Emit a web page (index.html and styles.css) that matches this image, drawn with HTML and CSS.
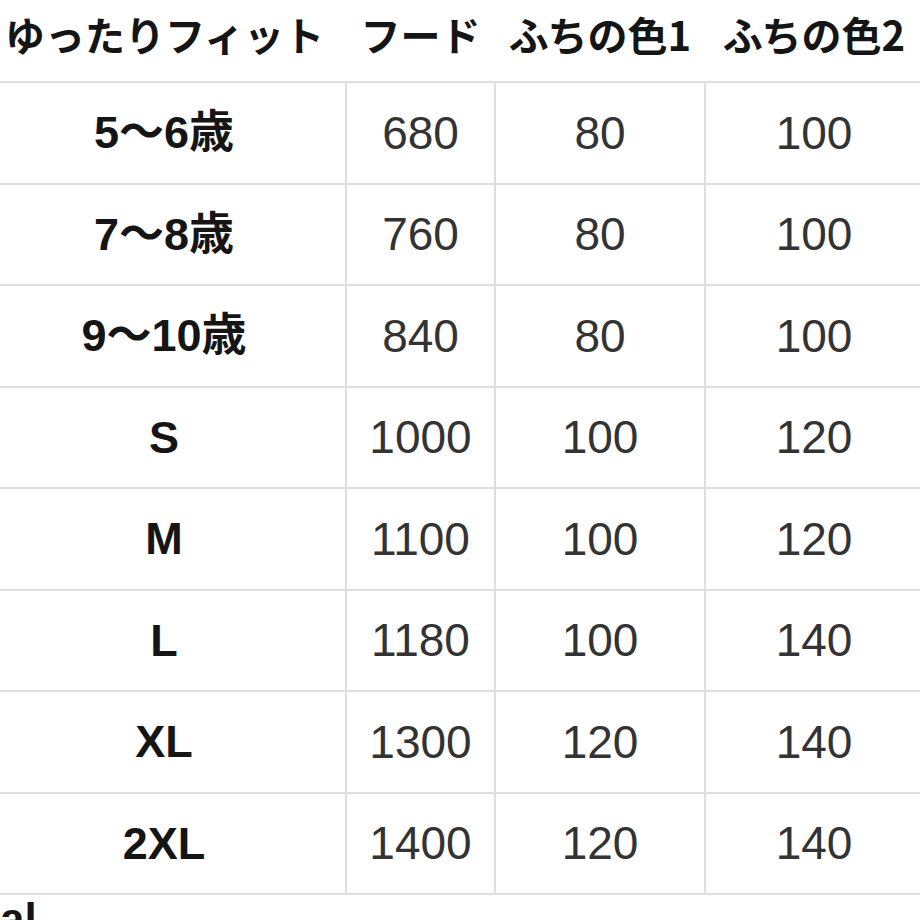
FILE: index.html
```html
<!DOCTYPE html>
<html lang="ja">
<head>
<meta charset="utf-8">
<link rel="stylesheet" href="styles.css">
</head>
<body>
<table class="size-table">
  <thead>
    <tr>
      <th class="col-size">ゆったりフィット</th>
      <th class="col-hood">フード</th>
      <th class="col-c1">ふちの色1</th>
      <th class="col-c2">ふちの色2</th>
    </tr>
  </thead>
  <tbody>
    <tr><td class="size">5〜6歳</td><td>680</td><td>80</td><td>100</td></tr>
    <tr><td class="size">7〜8歳</td><td>760</td><td>80</td><td>100</td></tr>
    <tr><td class="size">9〜10歳</td><td>840</td><td>80</td><td>100</td></tr>
    <tr><td class="size">S</td><td>1000</td><td>100</td><td>120</td></tr>
    <tr><td class="size">M</td><td>1100</td><td>100</td><td>120</td></tr>
    <tr><td class="size">L</td><td>1180</td><td>100</td><td>140</td></tr>
    <tr><td class="size">XL</td><td>1300</td><td>120</td><td>140</td></tr>
    <tr><td class="size">2XL</td><td>1400</td><td>120</td><td>140</td></tr>
  </tbody>
</table>
<p class="note">al</p>
</body>
</html>
```
FILE: styles.css
```css
html, body {
  margin: 0;
  padding: 0;
  background: #ffffff;
  overflow: hidden;
}
body {
  width: 920px;
  height: 920px;
  font-family: "Liberation Sans", "Noto Sans CJK JP", sans-serif;
  color: #1a1a1a;
}
.size-table {
  border-collapse: collapse;
  margin-left: -17px;
  width: 940px;
  table-layout: fixed;
}
.col-size { width: 363px; }
.col-hood { width: 149px; }
.col-c1 { width: 210px; }
.col-c2 { width: 218px; }
.size-table th {
  font-family: "Noto Sans CJK JP", "Liberation Sans", sans-serif;
  font-weight: 700;
  font-size: 40px;
  color: #151515;
  height: 82px;
  padding: 0 0 14px 0;
  box-sizing: border-box;
  vertical-align: middle;
  text-align: center;
  white-space: nowrap;
  border-bottom: 2px solid #dedede;
  line-height: 1;
}
.size-table th.col-c1,
.size-table th.col-c2 {
  font-family: "Noto Sans CJK JP", sans-serif;
}
.size-table td {
  height: 99.5px;
  padding: 0;
  text-align: center;
  vertical-align: middle;
  font-size: 46px;
  color: #333333;
  border: 2px solid #dedede;
  border-top: none;
  line-height: 1;
}
.size-table td:first-child { border-left: none; }
.size-table td.size {
  font-weight: 700;
  color: #151515;
  font-size: 45px;
}
.note {
  margin: 2px 0 0 0;
  font-weight: 700;
  font-size: 44px;
  line-height: 1;
  color: #151515;
}
```
